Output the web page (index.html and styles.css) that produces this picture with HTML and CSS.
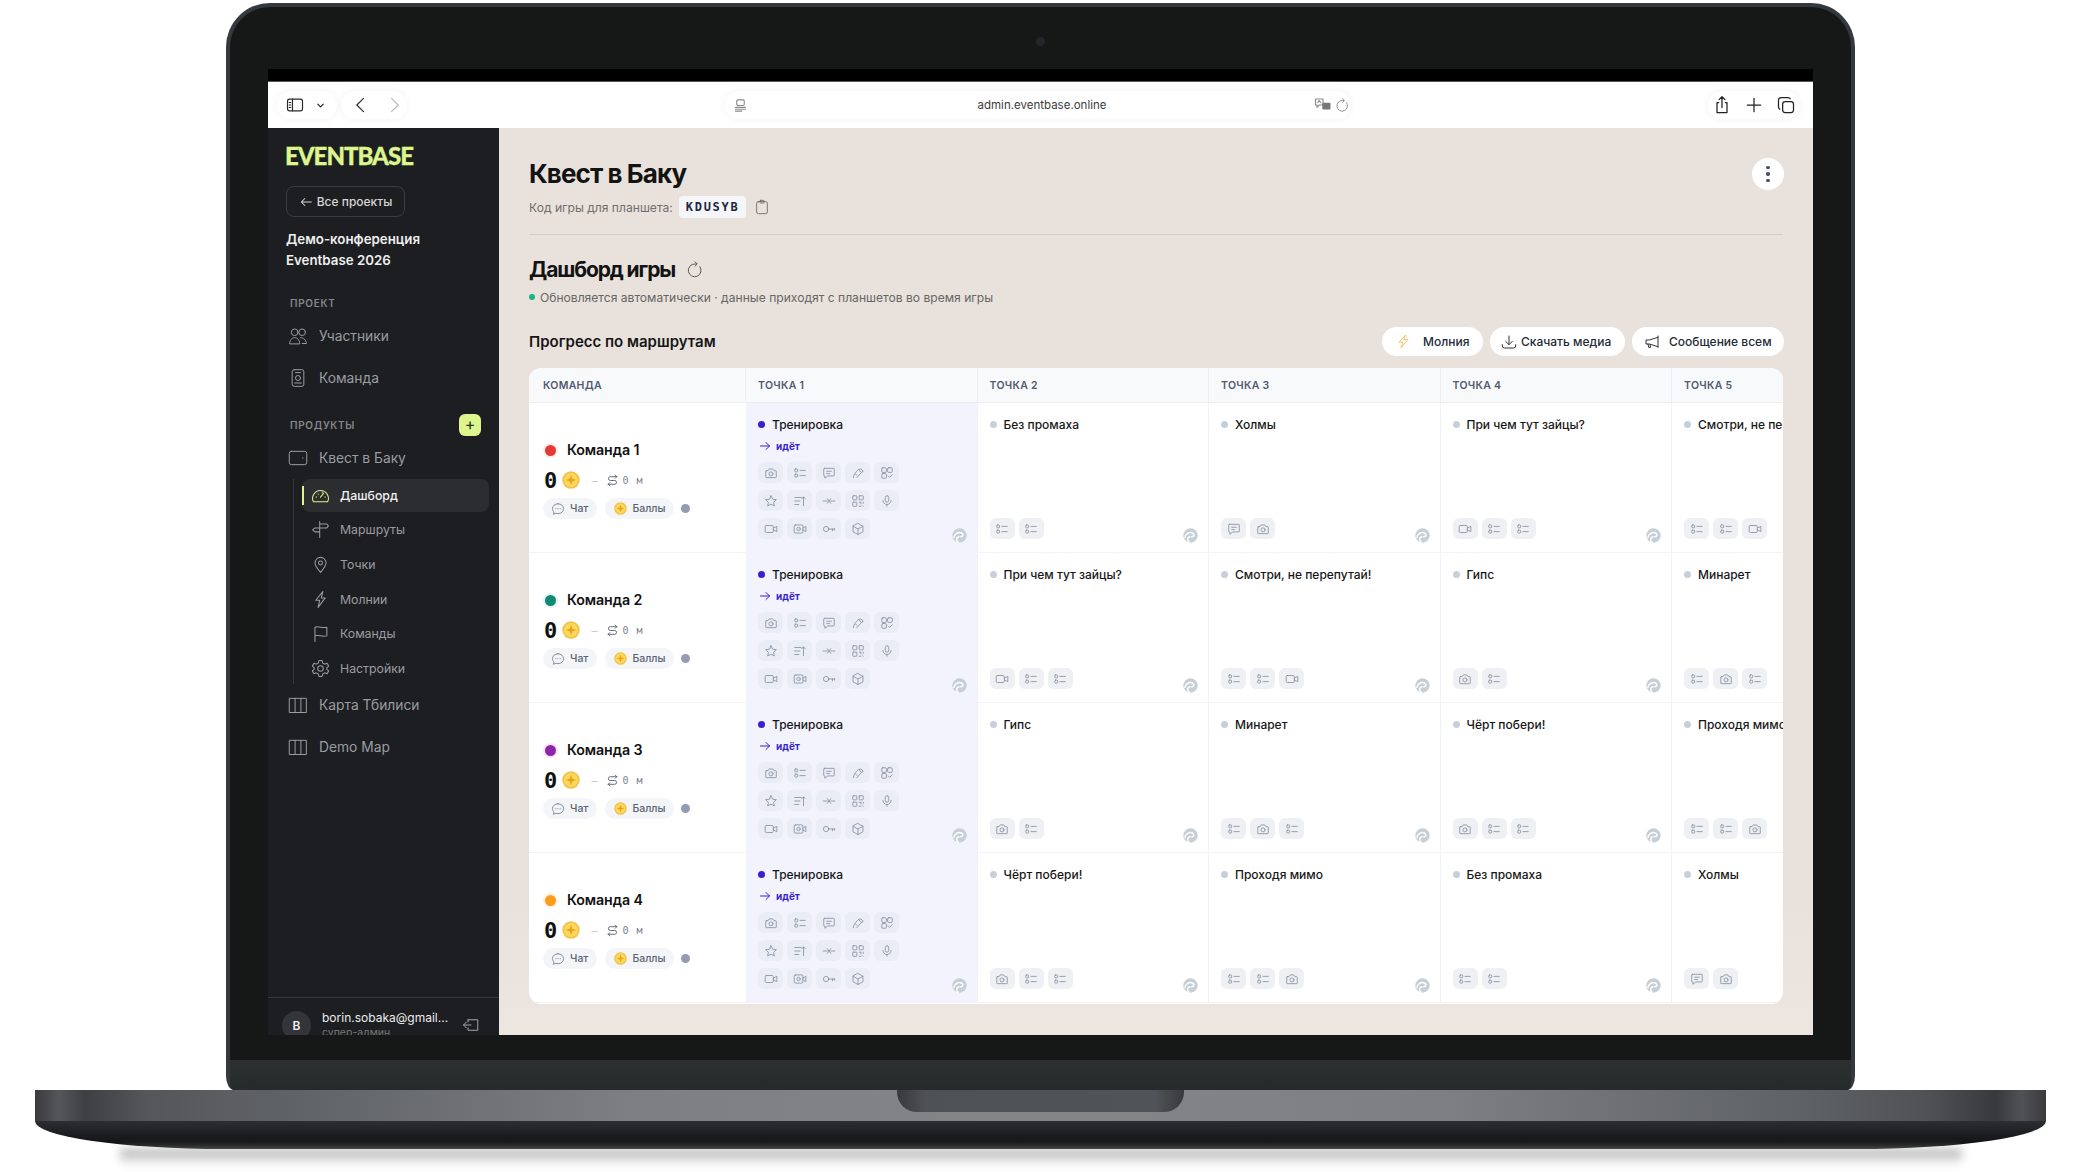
FILE: index.html
```html
<!DOCTYPE html>
<html lang="ru">
<head>
<meta charset="utf-8">
<title>Eventbase</title>
<link rel="stylesheet" href="styles.css">
</head>
<body>
<svg class="defs" width="0" height="0" aria-hidden="true">
<symbol id="camera" viewBox="0 0 24 24"><path d="M4 8h3l2-3h6l2 3h3a1 1 0 0 1 1 1v10a1 1 0 0 1-1 1H4a1 1 0 0 1-1-1V9a1 1 0 0 1 1-1z"/><circle cx="12" cy="13.5" r="3.5"/></symbol>
<symbol id="list" viewBox="0 0 24 24"><rect x="3" y="5" width="5" height="5" rx="1.5"/><rect x="3" y="14" width="5" height="5" rx="1.5"/><path d="M12 7.5h9M12 16.5h9"/></symbol>
<symbol id="chat" viewBox="0 0 24 24"><path d="M4 4h16a1 1 0 0 1 1 1v11a1 1 0 0 1-1 1H10l-5 4v-4H4a1 1 0 0 1-1-1V5a1 1 0 0 1 1-1z"/><path d="M8 9h8M8 13h5"/></symbol>
<symbol id="tool" viewBox="0 0 24 24"><path d="M4 20c0-5 5-11 9-14l4-1 4 4-3 2-8 9"/><path d="M13 6l5 5M8 14l2 2"/></symbol>
<symbol id="apps" viewBox="0 0 24 24"><rect x="3" y="3" width="8" height="8" rx="2"/><rect x="13" y="3" width="8" height="8" rx="2"/><rect x="3" y="13" width="8" height="8" rx="2"/><path d="M14 17l2.5 2.5L21 15"/></symbol>
<symbol id="star" viewBox="0 0 24 24"><path d="M12 3l2.8 5.9 6.4.8-4.7 4.4 1.2 6.4L12 17.4l-5.7 3.1 1.2-6.4-4.7-4.4 6.4-.8z"/></symbol>
<symbol id="sort" viewBox="0 0 24 24"><path d="M3 6h11M3 12h9M3 18h7M18 20V5M15 8l3-3 3 3"/></symbol>
<symbol id="bird" viewBox="0 0 24 24"><path d="M2 12h7M15 12h7M9 8l3 4 3-4M9 16l3-4 3 4"/></symbol>
<symbol id="qr" viewBox="0 0 24 24"><rect x="3" y="3" width="7" height="7" rx="1"/><rect x="14" y="3" width="7" height="7" rx="1"/><rect x="3" y="14" width="7" height="7" rx="1"/><path d="M14 14h3v3M21 14v2M14 21h3M20 20l1 1"/></symbol>
<symbol id="mic" viewBox="0 0 24 24"><rect x="9" y="3" width="6" height="11" rx="3"/><path d="M5 11a7 7 0 0 0 14 0M12 18v3"/></symbol>
<symbol id="video" viewBox="0 0 24 24"><rect x="2" y="6" width="14" height="12" rx="2"/><path d="M16 10.5l6-3v9l-6-3"/></symbol>
<symbol id="video2" viewBox="0 0 24 24"><rect x="2" y="5" width="15" height="14" rx="2"/><circle cx="9.5" cy="12" r="3"/><path d="M17 10.5l5-3v9l-5-3"/></symbol>
<symbol id="key" viewBox="0 0 24 24"><circle cx="7" cy="12" r="4.5"/><path d="M11.5 12H22M18 12v3M21.5 12v2"/></symbol>
<symbol id="cube" viewBox="0 0 24 24"><path d="M12 2.5l8.5 4.8v9.4L12 21.5l-8.500-4.800V7.300z"/><path d="M3.500 7.300L12 12l8.500-4.700M12 12v9.500"/></symbol>
<symbol id="swirl" viewBox="0 0 24 24"><circle cx="12" cy="12" r="11.500" class="swirl-bg"/><path class="swirl-line" d="M3 15c1-6 7-9 12-7 4 2 3 6-1 6"/><path class="swirl-line" d="M10 23c-4-3-3-8 1-9"/></symbol>
<symbol id="coin" viewBox="0 0 24 24"><circle cx="12" cy="12" r="11.600" class="coin-edge"/><circle cx="12" cy="12" r="9.300" class="coin-face"/><path class="coin-star" d="M12 5l1.700 5.300L19 12l-5.300 1.700L12 19l-1.700-5.300L5 12l5.300-1.700z"/></symbol>
<symbol id="bubble" viewBox="0 0 24 24"><path d="M12 3c5.500 0 9.500 3.800 9.500 8.500S17.500 20 12 20c-1.300 0-2.500-.2-3.600-.6L4 21l1.200-3.700C3.500 15.700 2.500 13.700 2.500 11.500 2.500 6.800 6.500 3 12 3z"/><path d="M8 11.500h.5M11.800 11.500h.5M15.600 11.500h.5"/></symbol>
<symbol id="route" viewBox="0 0 24 24"><path d="M20 5H8a3.500 3.500 0 0 0 0 7h8a3.500 3.500 0 0 1 0 7H4M17 2l3 3-3 3M7 16l-3 3 3 3"/></symbol>
</svg>

<div class="page">
  <div class="lid">
    <span class="camera-dot"></span>
    <div class="screen">
      <div class="strip"></div>
      <header class="browser">
        <div class="b-group b-group-a">
          <svg class="b-ic" viewBox="0 0 24 24"><rect x="3" y="5" width="18" height="14" rx="2.500"/><path d="M9 5v14M5 9h2M5 12h2M5 15h2"/></svg>
          <svg class="b-chev" viewBox="0 0 24 24"><path d="M6 9l6 6 6-6"/></svg>
        </div>
        <div class="b-group b-group-b">
          <svg class="b-ic" viewBox="0 0 24 24"><path d="M15 4l-8 8 8 8"/></svg>
          <svg class="b-ic b-off" viewBox="0 0 24 24"><path d="M9 4l8 8-8 8"/></svg>
        </div>
        <div class="address">
          <svg class="addr-ic" viewBox="0 0 24 24"><rect x="6" y="3" width="12" height="9" rx="2"/><path d="M4 15h16M4 18h16M4 21h10"/></svg>
          <span class="url">admin.eventbase.online</span>
          <svg class="addr-tr" viewBox="0 0 24 24"><path d="M2 4h10v8H7l-3 3v-3H2zM5 9l2-3 2 3"/><rect class="tr-fill" x="11" y="9" width="11" height="9" rx="1.500"/></svg>
          <svg class="addr-re" viewBox="0 0 24 24"><path d="M18.500 7.500A8.500 8.500 0 1 1 12 4h2M12 1l3 3-3 3"/></svg>
        </div>
        <div class="b-group b-group-c">
          <svg class="b-act" viewBox="0 0 24 24"><path d="M8 9H6v12h12V9h-2M12 15V2M8.500 5.500L12 2l3.500 3.500"/></svg>
          <svg class="b-act" viewBox="0 0 24 24"><path d="M12 4v16M4 12h16"/></svg>
          <svg class="b-act" viewBox="0 0 24 24"><rect x="8" y="8" width="13" height="13" rx="3"/><path d="M17 4.500C16.500 3.500 15.500 3 14.500 3H6a3 3 0 0 0-3 3v8.500c0 1 .5 2 1.500 2.500"/></svg>
        </div>
      </header>
      <div class="app">
        <aside class="sidebar">
          <div class="logo">EVENTBASE</div>
          <a class="back"><svg class="back-ic" viewBox="0 0 24 24"><path d="M21 12H4M10 6l-6 6 6 6"/></svg>Все проекты</a>
          <div class="project">Демо-конференция<br>Eventbase 2026</div>
          <div class="label label-project">ПРОЕКТ</div>
          <a class="nav"><svg class="nav-ic" viewBox="0 0 24 24"><circle cx="8" cy="7.500" r="4"/><circle cx="17" cy="7.500" r="4"/><path d="M2 21c0-4 2.500-7 6-7s6 3 6 7zM15 14c4 0 7 3 7 7h-5"/></svg>Участники</a>
          <a class="nav"><svg class="nav-ic" viewBox="0 0 24 24"><rect x="5" y="2" width="14" height="20" rx="2.500"/><circle cx="12" cy="12" r="3"/><path d="M9 5.500h6M8 18h8"/></svg>Команда</a>
          <div class="label-row"><div class="label">ПРОДУКТЫ</div><span class="add">+</span></div>
          <a class="nav"><svg class="nav-ic" viewBox="0 0 24 24"><rect x="1.500" y="4" width="21" height="16" rx="2.500"/><path d="M17.500 12h.5"/></svg>Квест в Баку</a>
          <div class="sub">
            <a class="sub-item active"><svg class="sub-ic" viewBox="0 0 24 24"><path d="M3 20a10 10 0 1 1 18 0zM12 14l4-5M6.500 14h.5M9 10h.5M14 8h.5M17.500 14h.5"/></svg>Дашборд</a>
            <a class="sub-item"><svg class="sub-ic" viewBox="0 0 24 24"><path d="M11 2v20M11 5h9l2 2.500-2 2.500h-9M11 10H5l-3 2.500L5 15h6"/></svg>Маршруты</a>
            <a class="sub-item"><svg class="sub-ic" viewBox="0 0 24 24"><path d="M12 22c-4-5-7-8.500-7-12a7 7 0 0 1 14 0c0 3.500-3 7-7 12z"/><circle cx="12" cy="10" r="2.500"/></svg>Точки</a>
            <a class="sub-item"><svg class="sub-ic" viewBox="0 0 24 24"><path d="M15 2L6 13h5l-2 9 9-12h-5z"/></svg>Молнии</a>
            <a class="sub-item"><svg class="sub-ic" viewBox="0 0 24 24"><path d="M5 22V4c5-2 9 2 15 0v11c-6 2-10-2-15 0"/></svg>Команды</a>
            <a class="sub-item"><svg class="sub-ic" viewBox="0 0 24 24"><circle cx="12" cy="12" r="3.500"/><path d="M10 2h4l.7 3 2.600 1.500 3-1 2 3.500-2.300 2v2l2.300 2-2 3.500-3-1L14.700 19l-.7 3h-4l-.7-3-2.600-1.500-3 1-2-3.500L4 13v-2L1.700 9l2-3.500 3 1L9.300 5z"/></svg>Настройки</a>
          </div>
          <a class="nav"><svg class="nav-ic" viewBox="0 0 24 24"><path d="M2 4h20v17H2zM8.500 4v17M15.500 4v17"/></svg>Карта Тбилиси</a>
          <a class="nav"><svg class="nav-ic" viewBox="0 0 24 24"><path d="M2 4h20v17H2zM8.500 4v17M15.500 4v17"/></svg>Demo Map</a>
          <div class="footer">
            <span class="avatar">B</span>
            <div class="who"><div class="email">borin.sobaka@gmail...</div><div class="role">супер-админ</div></div>
            <svg class="logout" viewBox="0 0 24 24"><path d="M8 5h13v14H8v-3M8 8V5M12 12H2M6 8l-4 4 4 4"/></svg>
          </div>
        </aside>
        <main class="main">
          <div class="title-row">
            <h1 class="title">Квест в Баку</h1>
            <span class="kebab"><i></i><i></i><i></i></span>
          </div>
          <div class="code-row">
            <span>Код игры для планшета:</span>
            <span class="code">KDUSYB</span>
            <svg class="clip" viewBox="0 0 24 24"><rect x="4" y="4" width="16" height="18" rx="2.500"/><rect x="9" y="2" width="6" height="4" rx="1"/></svg>
          </div>
          <div class="divider"></div>
          <div class="dash-row">
            <h2 class="dash">Дашборд игры</h2>
            <svg class="refresh" viewBox="0 0 24 24"><path d="M18.500 7.500A8.500 8.500 0 1 1 12 4h2M12 1l3 3-3 3"/></svg>
          </div>
          <div class="status"><span class="status-dot"></span>Обновляется автоматически · данные приходят с планшетов во время игры</div>
          <div class="progress-row">
            <h3 class="progress">Прогресс по маршрутам</h3>
            <div class="actions">
              <a class="btn btn-bolt"><svg class="bolt" viewBox="0 0 24 24"><path d="M15 2L5 13h6l-3 9 11-13h-6z"/></svg>Молния</a>
              <a class="btn btn-dl"><svg class="btn-ic" viewBox="0 0 24 24"><path d="M12 3v13M7 11l5 5 5-5M2 16v2a3 3 0 0 0 3 3h14a3 3 0 0 0 3-3v-2"/></svg>Скачать медиа</a>
              <a class="btn btn-msg"><svg class="btn-ic" viewBox="0 0 24 24"><path d="M21 3v17M21 5L8 9H3v6h5l13 4M6 15l1 5h3l-1-4"/></svg>Сообщение всем</a>
            </div>
          </div>
          <section class="board">
            <div class="th">КОМАНДА</div><div class="th">ТОЧКА 1</div><div class="th">ТОЧКА 2</div><div class="th">ТОЧКА 3</div><div class="th">ТОЧКА 4</div><div class="th">ТОЧКА 5</div>

            <div class="team">
              <div class="team-name"><span class="team-dot c-red"></span>Команда 1</div>
              <div class="score"><b class="zero">0</b><svg class="coin"><use href="#coin"/></svg><span class="dash-mark">–</span><svg class="route"><use href="#route"/></svg><span class="dist">0 м</span></div>
              <div class="pills"><span class="pill"><svg class="bubble"><use href="#bubble"/></svg>Чат</span><span class="pill pill-b"><svg class="coin-s"><use href="#coin"/></svg>Баллы</span><span class="grey-dot"></span></div>
            </div>
            <div class="cell now">
              <div class="pt"><span class="pt-dot"></span>Тренировка</div>
              <div class="going"><svg class="go-ic" viewBox="0 0 24 24"><path d="M3 12h18M14 5l7 7-7 7"/></svg>идёт</div>
              <div class="chips chips-full"><span class="chip"><svg><use href="#camera"/></svg></span><span class="chip"><svg><use href="#list"/></svg></span><span class="chip"><svg><use href="#chat"/></svg></span><span class="chip"><svg><use href="#tool"/></svg></span><span class="chip"><svg><use href="#apps"/></svg></span><span class="chip"><svg><use href="#star"/></svg></span><span class="chip"><svg><use href="#sort"/></svg></span><span class="chip"><svg><use href="#bird"/></svg></span><span class="chip"><svg><use href="#qr"/></svg></span><span class="chip"><svg><use href="#mic"/></svg></span><span class="chip"><svg><use href="#video"/></svg></span><span class="chip"><svg><use href="#video2"/></svg></span><span class="chip"><svg><use href="#key"/></svg></span><span class="chip"><svg><use href="#cube"/></svg></span></div>
              <svg class="swirl"><use href="#swirl"/></svg>
            </div>
            <div class="cell"><div class="pt"><span class="pt-dot off"></span>Без промаха</div><div class="chips"><span class="chip"><svg><use href="#list"/></svg></span><span class="chip"><svg><use href="#list"/></svg></span></div><svg class="swirl"><use href="#swirl"/></svg></div>
            <div class="cell"><div class="pt"><span class="pt-dot off"></span>Холмы</div><div class="chips"><span class="chip"><svg><use href="#chat"/></svg></span><span class="chip"><svg><use href="#camera"/></svg></span></div><svg class="swirl"><use href="#swirl"/></svg></div>
            <div class="cell"><div class="pt"><span class="pt-dot off"></span>При чем тут зайцы?</div><div class="chips"><span class="chip"><svg><use href="#video"/></svg></span><span class="chip"><svg><use href="#list"/></svg></span><span class="chip"><svg><use href="#list"/></svg></span></div><svg class="swirl"><use href="#swirl"/></svg></div>
            <div class="cell"><div class="pt"><span class="pt-dot off"></span>Смотри, не перепутай!</div><div class="chips"><span class="chip"><svg><use href="#list"/></svg></span><span class="chip"><svg><use href="#list"/></svg></span><span class="chip"><svg><use href="#video"/></svg></span></div><svg class="swirl"><use href="#swirl"/></svg></div>

            <div class="team">
              <div class="team-name"><span class="team-dot c-green"></span>Команда 2</div>
              <div class="score"><b class="zero">0</b><svg class="coin"><use href="#coin"/></svg><span class="dash-mark">–</span><svg class="route"><use href="#route"/></svg><span class="dist">0 м</span></div>
              <div class="pills"><span class="pill"><svg class="bubble"><use href="#bubble"/></svg>Чат</span><span class="pill pill-b"><svg class="coin-s"><use href="#coin"/></svg>Баллы</span><span class="grey-dot"></span></div>
            </div>
            <div class="cell now">
              <div class="pt"><span class="pt-dot"></span>Тренировка</div>
              <div class="going"><svg class="go-ic" viewBox="0 0 24 24"><path d="M3 12h18M14 5l7 7-7 7"/></svg>идёт</div>
              <div class="chips chips-full"><span class="chip"><svg><use href="#camera"/></svg></span><span class="chip"><svg><use href="#list"/></svg></span><span class="chip"><svg><use href="#chat"/></svg></span><span class="chip"><svg><use href="#tool"/></svg></span><span class="chip"><svg><use href="#apps"/></svg></span><span class="chip"><svg><use href="#star"/></svg></span><span class="chip"><svg><use href="#sort"/></svg></span><span class="chip"><svg><use href="#bird"/></svg></span><span class="chip"><svg><use href="#qr"/></svg></span><span class="chip"><svg><use href="#mic"/></svg></span><span class="chip"><svg><use href="#video"/></svg></span><span class="chip"><svg><use href="#video2"/></svg></span><span class="chip"><svg><use href="#key"/></svg></span><span class="chip"><svg><use href="#cube"/></svg></span></div>
              <svg class="swirl"><use href="#swirl"/></svg>
            </div>
            <div class="cell"><div class="pt"><span class="pt-dot off"></span>При чем тут зайцы?</div><div class="chips"><span class="chip"><svg><use href="#video"/></svg></span><span class="chip"><svg><use href="#list"/></svg></span><span class="chip"><svg><use href="#list"/></svg></span></div><svg class="swirl"><use href="#swirl"/></svg></div>
            <div class="cell"><div class="pt"><span class="pt-dot off"></span>Смотри, не перепутай!</div><div class="chips"><span class="chip"><svg><use href="#list"/></svg></span><span class="chip"><svg><use href="#list"/></svg></span><span class="chip"><svg><use href="#video"/></svg></span></div><svg class="swirl"><use href="#swirl"/></svg></div>
            <div class="cell"><div class="pt"><span class="pt-dot off"></span>Гипс</div><div class="chips"><span class="chip"><svg><use href="#camera"/></svg></span><span class="chip"><svg><use href="#list"/></svg></span></div><svg class="swirl"><use href="#swirl"/></svg></div>
            <div class="cell"><div class="pt"><span class="pt-dot off"></span>Минарет</div><div class="chips"><span class="chip"><svg><use href="#list"/></svg></span><span class="chip"><svg><use href="#camera"/></svg></span><span class="chip"><svg><use href="#list"/></svg></span></div><svg class="swirl"><use href="#swirl"/></svg></div>

            <div class="team">
              <div class="team-name"><span class="team-dot c-purple"></span>Команда 3</div>
              <div class="score"><b class="zero">0</b><svg class="coin"><use href="#coin"/></svg><span class="dash-mark">–</span><svg class="route"><use href="#route"/></svg><span class="dist">0 м</span></div>
              <div class="pills"><span class="pill"><svg class="bubble"><use href="#bubble"/></svg>Чат</span><span class="pill pill-b"><svg class="coin-s"><use href="#coin"/></svg>Баллы</span><span class="grey-dot"></span></div>
            </div>
            <div class="cell now">
              <div class="pt"><span class="pt-dot"></span>Тренировка</div>
              <div class="going"><svg class="go-ic" viewBox="0 0 24 24"><path d="M3 12h18M14 5l7 7-7 7"/></svg>идёт</div>
              <div class="chips chips-full"><span class="chip"><svg><use href="#camera"/></svg></span><span class="chip"><svg><use href="#list"/></svg></span><span class="chip"><svg><use href="#chat"/></svg></span><span class="chip"><svg><use href="#tool"/></svg></span><span class="chip"><svg><use href="#apps"/></svg></span><span class="chip"><svg><use href="#star"/></svg></span><span class="chip"><svg><use href="#sort"/></svg></span><span class="chip"><svg><use href="#bird"/></svg></span><span class="chip"><svg><use href="#qr"/></svg></span><span class="chip"><svg><use href="#mic"/></svg></span><span class="chip"><svg><use href="#video"/></svg></span><span class="chip"><svg><use href="#video2"/></svg></span><span class="chip"><svg><use href="#key"/></svg></span><span class="chip"><svg><use href="#cube"/></svg></span></div>
              <svg class="swirl"><use href="#swirl"/></svg>
            </div>
            <div class="cell"><div class="pt"><span class="pt-dot off"></span>Гипс</div><div class="chips"><span class="chip"><svg><use href="#camera"/></svg></span><span class="chip"><svg><use href="#list"/></svg></span></div><svg class="swirl"><use href="#swirl"/></svg></div>
            <div class="cell"><div class="pt"><span class="pt-dot off"></span>Минарет</div><div class="chips"><span class="chip"><svg><use href="#list"/></svg></span><span class="chip"><svg><use href="#camera"/></svg></span><span class="chip"><svg><use href="#list"/></svg></span></div><svg class="swirl"><use href="#swirl"/></svg></div>
            <div class="cell"><div class="pt"><span class="pt-dot off"></span>Чёрт побери!</div><div class="chips"><span class="chip"><svg><use href="#camera"/></svg></span><span class="chip"><svg><use href="#list"/></svg></span><span class="chip"><svg><use href="#list"/></svg></span></div><svg class="swirl"><use href="#swirl"/></svg></div>
            <div class="cell"><div class="pt"><span class="pt-dot off"></span>Проходя мимо</div><div class="chips"><span class="chip"><svg><use href="#list"/></svg></span><span class="chip"><svg><use href="#list"/></svg></span><span class="chip"><svg><use href="#camera"/></svg></span></div><svg class="swirl"><use href="#swirl"/></svg></div>

            <div class="team">
              <div class="team-name"><span class="team-dot c-orange"></span>Команда 4</div>
              <div class="score"><b class="zero">0</b><svg class="coin"><use href="#coin"/></svg><span class="dash-mark">–</span><svg class="route"><use href="#route"/></svg><span class="dist">0 м</span></div>
              <div class="pills"><span class="pill"><svg class="bubble"><use href="#bubble"/></svg>Чат</span><span class="pill pill-b"><svg class="coin-s"><use href="#coin"/></svg>Баллы</span><span class="grey-dot"></span></div>
            </div>
            <div class="cell now">
              <div class="pt"><span class="pt-dot"></span>Тренировка</div>
              <div class="going"><svg class="go-ic" viewBox="0 0 24 24"><path d="M3 12h18M14 5l7 7-7 7"/></svg>идёт</div>
              <div class="chips chips-full"><span class="chip"><svg><use href="#camera"/></svg></span><span class="chip"><svg><use href="#list"/></svg></span><span class="chip"><svg><use href="#chat"/></svg></span><span class="chip"><svg><use href="#tool"/></svg></span><span class="chip"><svg><use href="#apps"/></svg></span><span class="chip"><svg><use href="#star"/></svg></span><span class="chip"><svg><use href="#sort"/></svg></span><span class="chip"><svg><use href="#bird"/></svg></span><span class="chip"><svg><use href="#qr"/></svg></span><span class="chip"><svg><use href="#mic"/></svg></span><span class="chip"><svg><use href="#video"/></svg></span><span class="chip"><svg><use href="#video2"/></svg></span><span class="chip"><svg><use href="#key"/></svg></span><span class="chip"><svg><use href="#cube"/></svg></span></div>
              <svg class="swirl"><use href="#swirl"/></svg>
            </div>
            <div class="cell"><div class="pt"><span class="pt-dot off"></span>Чёрт побери!</div><div class="chips"><span class="chip"><svg><use href="#camera"/></svg></span><span class="chip"><svg><use href="#list"/></svg></span><span class="chip"><svg><use href="#list"/></svg></span></div><svg class="swirl"><use href="#swirl"/></svg></div>
            <div class="cell"><div class="pt"><span class="pt-dot off"></span>Проходя мимо</div><div class="chips"><span class="chip"><svg><use href="#list"/></svg></span><span class="chip"><svg><use href="#list"/></svg></span><span class="chip"><svg><use href="#camera"/></svg></span></div><svg class="swirl"><use href="#swirl"/></svg></div>
            <div class="cell"><div class="pt"><span class="pt-dot off"></span>Без промаха</div><div class="chips"><span class="chip"><svg><use href="#list"/></svg></span><span class="chip"><svg><use href="#list"/></svg></span></div><svg class="swirl"><use href="#swirl"/></svg></div>
            <div class="cell"><div class="pt"><span class="pt-dot off"></span>Холмы</div><div class="chips"><span class="chip"><svg><use href="#chat"/></svg></span><span class="chip"><svg><use href="#camera"/></svg></span></div><svg class="swirl"><use href="#swirl"/></svg></div>
          </section>
        </main>
      </div>
    </div>
    <div class="chin"></div>
    <div class="hinge"></div>
  </div>
  <div class="base">
    <div class="base-top"><span class="notch"></span></div>
    <div class="base-bottom"></div>
  </div>
  <div class="ground"></div>
</div>
</body>
</html>
```
FILE: styles.css
```css
* { box-sizing: border-box; }
html, body { margin: 0; padding: 0; background: #fff; }
body { font-family: Inter, "Noto Sans", sans-serif; color: #111; }
h1, h2, h3 { margin: 0; }
a { color: inherit; text-decoration: none; }
svg { display: block; flex: none; fill: none; stroke: currentColor; stroke-linecap: round; stroke-linejoin: round; }
.defs { position: absolute; }

.page { width: 2082px; height: 1172px; overflow: hidden; padding-top: 3px; }

/* laptop lid */
.lid { position: relative; width: 1629px; height: 1087px; margin-left: 226px; padding: 62px 38px 0; background: #161818; border: 4px solid #33393e; border-bottom: 0; border-radius: 44px 44px 8px 8px / 44px 44px 14px 14px; }
.camera-dot { position: absolute; left: 806px; top: 30px; width: 9px; height: 9px; border-radius: 50%; background: #22272a; }
.screen { display: flex; flex-direction: column; height: 966px; overflow: hidden; }
.strip { height: 13px; background: #000; border-bottom: 1px solid #55585a; flex: none; }
.chin { height: 25px; }
.hinge { height: 30px; margin: 0 -38px; background: linear-gradient(#2b3031, #252b2b); border-radius: 0 0 6px 6px; }

/* browser bar */
.browser { flex: none; height: 46px; display: flex; align-items: center; background: #fff; padding-left: 9px; color: #222; }
.b-group { height: 28px; display: flex; align-items: center; border-radius: 14px; box-shadow: 0 0 8px rgba(0, 0, 0, .05); }
.b-group-a { width: 60px; padding-left: 8px; gap: 10px; }
.b-group-b { width: 66px; margin-left: 4px; padding-left: 10px; gap: 13px; }
.b-ic { width: 20px; height: 20px; stroke-width: 1.400; color: #2a2a2a; }
.b-off { color: #b8b8b8; }
.b-chev { width: 11px; height: 11px; stroke-width: 2.600; }
.address { width: 626px; height: 28px; margin-left: 318px; display: flex; align-items: center; border-radius: 14px; box-shadow: 0 0 8px rgba(0, 0, 0, .05); padding: 0 1px 0 8px; color: #8b8b8b; }
.addr-ic { width: 15px; height: 15px; stroke-width: 1.800; }
.url { flex: 1; text-align: center; font-size: 11.500px; color: #3c3c3c; padding-left: 22px; }
.addr-tr { width: 18px; height: 18px; stroke-width: 1.500; }
.tr-fill { fill: #777; stroke: none; }
.addr-re { width: 15px; height: 15px; margin-left: 3px; stroke-width: 1.500; }
.b-group-c { width: 92px; margin-left: 357px; padding: 0 4px; justify-content: space-between; }
.b-act { width: 20px; height: 20px; stroke-width: 1.500; color: #222; }

/* app */
.app { flex: 1; display: flex; min-height: 0; }
.sidebar { flex: none; width: 231px; display: flex; flex-direction: column; background: #1c1e21; overflow: hidden; padding-top: 18px; color: #9a9da0; }
.logo { margin-left: 17px; font-family: Lato, sans-serif; font-weight: 900; font-size: 24px; line-height: 19px; letter-spacing: -1px; color: #dcf58c; -webkit-text-stroke: .3px #dcf58c; }
.back { align-self: flex-start; margin: 21px 0 0 18px; width: 119px; height: 31px; display: flex; align-items: center; justify-content: center; gap: 4px; border: 1px solid #3b3e41; border-radius: 8px; color: #d6d6d6; font-size: 12px; font-weight: 500; }
.back-ic { width: 14px; height: 14px; stroke-width: 1.800; }
.project { margin: 11.500px 0 0 18px; font-size: 13.300px; font-weight: 600; line-height: 21px; color: #eee; }
.label { font-size: 10px; font-weight: 600; letter-spacing: .7px; line-height: 12px; color: #85888b; }
.label-project { margin: 26px 0 0 22px; }
.label-row { height: 22px; margin: 15px 18px 1px 22px; display: flex; align-items: center; justify-content: space-between; }
.add { width: 22px; height: 22px; border-radius: 6px; background: #dcf58c; color: #2a3313; font-size: 16px; line-height: 20px; text-align: center; }
.nav { height: 42px; flex: none; display: flex; align-items: center; gap: 11px; padding-left: 20px; font-size: 13.800px; color: #9a9da0; }
.label-project + .nav { margin-top: 6px; }
.nav-ic { width: 20px; height: 20px; stroke-width: 1.200; }
.sub { flex: none; margin-left: 25px; border-left: 1px solid #35383b; padding-left: 8px; display: flex; flex-direction: column; gap: 1.700px; height: 205px; }
.sub-item { position: relative; width: 187px; height: 33px; flex: none; display: flex; align-items: center; gap: 10px; padding-left: 9px; font-size: 12.300px; color: #9a9da0; border-radius: 8px; }
.sub-ic { width: 19px; height: 19px; stroke-width: 1.300; }
.active { background: #2b2d30; color: #f2f2f2; font-weight: 500; }
.active .sub-ic { color: #dcf58c; }
.active::before { content: ""; position: absolute; left: 0; top: 7px; width: 2px; height: 19px; background: #dcf58c; }
.footer { margin-top: auto; height: 38px; flex: none; display: flex; align-items: flex-start; border-top: 1px solid #35373a; padding: 13px 0 0 14px; overflow: hidden; position: relative; }
.avatar { flex: none; width: 29px; height: 29px; border-radius: 50%; background: #33353a; color: #f0f0f0; font-size: 12px; font-weight: 600; line-height: 29px; text-align: center; }
.who { margin: -1px 0 0 11px; }
.email { font-size: 12px; line-height: 16px; color: #ececec; white-space: nowrap; }
.role { font-size: 10.500px; line-height: 14px; color: #777; }
.logout { width: 18px; height: 18px; margin: 5px 0 0 14px; stroke-width: 1.300; color: #a8a8a8; }

/* main */
.main { flex: 1; min-width: 0; display: flex; flex-direction: column; background: linear-gradient(#e9e2dc 85%, #ede5df); padding: 30px 30px 0; }
.title-row { height: 32px; display: flex; align-items: center; justify-content: space-between; }
.title { font-size: 26px; font-weight: 700; letter-spacing: -.9px; line-height: 32px; color: #131313; }
.kebab { width: 32px; height: 32px; margin-right: -1px; border-radius: 50%; background: #fff; display: flex; flex-direction: column; align-items: center; justify-content: center; gap: 3px; }
.kebab i { width: 3.500px; height: 3.500px; border-radius: 50%; background: #4b5068; }
.code-row { height: 22px; margin-top: 6px; display: flex; align-items: center; font-size: 12.100px; color: #6e6e6e; }
.code { height: 22px; margin-left: 6px; padding: 0 7px; border-radius: 4px; background: #f4f6fa; font-family: "DejaVu Sans Mono", monospace; font-size: 12px; font-weight: 700; letter-spacing: 1.700px; line-height: 22px; color: #1d2740; }
.clip { width: 16px; height: 16px; margin-left: 8px; stroke-width: 1.300; color: #666; }
.divider { height: 1px; margin-top: 16px; background: #d3cdc7; flex: none; }
.dash-row { height: 28px; margin-top: 21px; display: flex; align-items: center; gap: 11px; }
.dash { font-size: 21px; font-weight: 700; letter-spacing: -1.100px; line-height: 28px; color: #131313; }
.refresh { width: 18px; height: 18px; stroke-width: 1.300; color: #555; }
.status { height: 16px; margin-top: 5px; display: flex; align-items: center; font-size: 12.100px; color: #666; white-space: nowrap; }
.status-dot { width: 6px; height: 6px; margin-right: 5px; border-radius: 50%; background: #10b981; }
.progress-row { height: 29px; margin-top: 22px; display: flex; align-items: center; justify-content: space-between; }
.progress { font-size: 15px; font-weight: 600; letter-spacing: 0; color: #161616; }
.actions { display: flex; gap: 7px; margin-right: -1px; }
.btn { height: 29px; display: flex; align-items: center; border-radius: 15px; background: #fff; font-size: 12px; font-weight: 500; color: #222a38; }
.btn-bolt { width: 101px; padding-left: 14px; gap: 12px; }
.btn-dl { width: 135px; padding-left: 11px; gap: 4px; }
.btn-msg { width: 152px; padding-left: 12px; gap: 9px; }
.bolt { width: 15px; height: 15px; stroke-width: 1.300; color: #f5b342; }
.btn-ic { width: 16px; height: 16px; stroke-width: 1.500; color: #333; }

/* board */
.board { flex: none; height: 636px; margin-top: 12px; display: grid; grid-template-columns: 217px repeat(5, 231.500px); grid-template-rows: 35px repeat(4, 150px); border-radius: 12px; overflow: hidden; background: #fff; }
.th { padding-left: 12px; border-right: 1px solid #eceef2; border-bottom: 1px solid #eceef2; background: #f7f9fb; font-size: 10.500px; font-weight: 600; letter-spacing: .3px; line-height: 35px; color: #505a70; }
.th:first-child { padding-left: 14px; }
.team { display: flex; flex-direction: column; padding: 38px 0 0 14px; border-bottom: 1px solid #f4f4f6; }
.team-name { height: 18px; display: flex; align-items: center; font-size: 14.200px; font-weight: 600; line-height: 18px; letter-spacing: -.1px; color: #111; }
.team-dot { width: 11px; height: 11px; margin: 0 11px 0 2px; border-radius: 50%; }
.c-red { background: #e53935; box-shadow: 0 0 0 2px #fdecec; }
.c-green { background: #0e8a72; box-shadow: 0 0 0 2px #e6f4f1; }
.c-purple { background: #8e24aa; box-shadow: 0 0 0 2px #f4e9f7; }
.c-orange { background: #fb9c1c; box-shadow: 0 0 0 2px #fef3e3; }
.score { height: 20px; margin-top: 11px; display: flex; align-items: center; }
.zero { width: 13.500px; font-family: "DejaVu Sans Mono", monospace; font-size: 22px; font-weight: 700; color: #111; margin-left: 1px; }
.coin { width: 18px; height: 18px; margin-left: 4px; stroke: none; }
.coin-edge { fill: #f2c24a; stroke: none; }
.coin-face { fill: #fbd75a; stroke: none; }
.coin-star { fill: #e9a21a; stroke: none; }
.dash-mark { margin-left: 12px; width: 14px; font-size: 12px; color: #c8ccd2; }
.route { width: 13px; height: 13px; stroke-width: 1.700; color: #5a6070; }
.dist { margin-left: 4px; font-family: "DejaVu Sans Mono", monospace; font-size: 10px; color: #7c8290; word-spacing: 2px; }
.pills { height: 21px; margin-top: 8px; display: flex; align-items: center; gap: 8px; }
.pill { height: 21px; display: flex; align-items: center; gap: 5px; padding: 0 9px 0 8px; border-radius: 11px; background: #f3f5f8; font-size: 10.500px; font-weight: 500; color: #5a6372; }
.bubble { width: 14px; height: 14px; stroke-width: 1.500; color: #7a8290; }
.coin-s { width: 13px; height: 13px; stroke: none; }
.pill-b { padding-left: 9px; }
.grey-dot { width: 9px; height: 9px; margin-left: -1px; border-radius: 50%; background: #939cb2; }
.cell { position: relative; display: flex; flex-direction: column; padding: 12px 12px 0; border-right: 1px solid #f1f2f5; border-bottom: 1px solid #f4f4f6; white-space: nowrap; }
.now { background: #f3f3fd; }
.pt { height: 18px; display: flex; align-items: center; font-size: 12px; font-weight: 500; color: #171717; }
.pt-dot { width: 7px; height: 7px; margin-right: 7px; border-radius: 50%; background: #3a1fd1; flex: none; }
.off { background: #c9cedb; }
.going { height: 14px; margin-top: 6px; display: flex; align-items: center; font-size: 10px; font-weight: 700; color: #3a1fd1; }
.go-ic { width: 12px; height: 12px; margin: 0 5px 0 1px; stroke-width: 2; }
.chips { position: absolute; left: 12px; bottom: 13px; display: flex; gap: 4px; }
.chips-full { width: 142px; flex-wrap: wrap; row-gap: 7px; }
.chip { width: 25px; height: 21px; display: flex; align-items: center; justify-content: center; border-radius: 6px; background: #eef0f4; color: #8a92a3; }
.now .chip { background: #ebedf6; }
.chip svg { width: 14px; height: 14px; stroke-width: 1.500; }
.swirl { position: absolute; right: 10px; bottom: 9px; width: 15px; height: 15px; }
.swirl-bg { fill: #c6ced6; stroke: none; }
.swirl-line { fill: none; stroke: #fff; stroke-width: 2.400; }

/* base */
.base { position: relative; width: 2011px; margin-left: 35px; }
.base-top { position: relative; height: 31px; background: linear-gradient(90deg, #3a3a3d 0, #56575a 1.200%, #3e3f42 2.500%, #55565a 5.500%, #5f6265 12%, #7d7f82 30%, #838588 50%, #7d7f82 70%, #5f6265 88%, #505255 94%, #38393c 97.500%, #515256 98.800%, #3a3a3d 100%); }
.notch { position: absolute; left: 862px; top: 0; width: 287px; height: 22px; border-radius: 0 0 20px 20px; background: linear-gradient(90deg, #38393c, #4e5155 10%, #505357 90%, #38393c); }
.base-bottom { height: 28px; background: linear-gradient(#2c2e32, #0b0c0e); border-radius: 0 0 190px 190px / 0 0 28px 28px; }
.ground { height: 16px; margin: 0 120px; background: linear-gradient(#a6a6a6, rgba(255, 255, 255, 0)); filter: blur(5px); }
```
